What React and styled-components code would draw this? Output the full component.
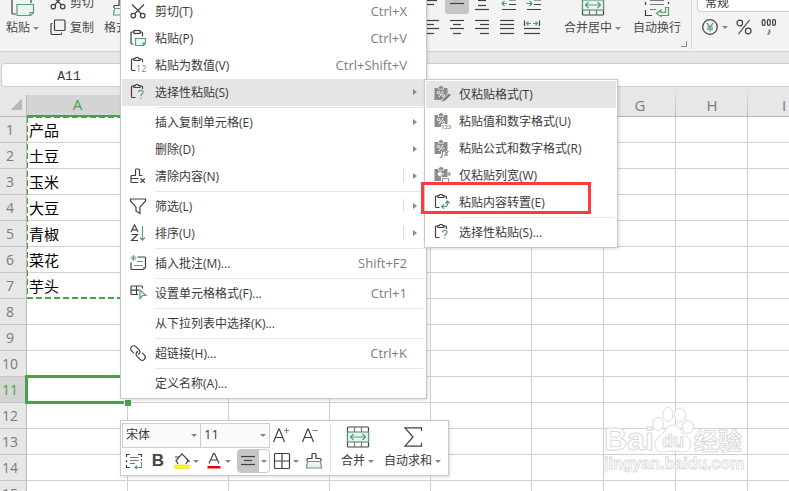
import React from 'react';
import styled, { createGlobalStyle } from 'styled-components';

const ink = '#404040';
const green = '#5a9c78';
const accent = '#43a643';

const GlobalStyle = createGlobalStyle`
    *{
        box-sizing: border-box;
    }
    body{
        margin: 0;
        overflow: hidden;
        background: #e7e7e7;
    }
    body, button, select, input{
        font-family: "Open Sans", "Noto Sans CJK SC", sans-serif;
        font-size: 12px;
        color: #3a3a3a;
    }
    button{
        border: 0;
        margin: 0;
        padding: 0;
        background: none;
        text-align: left;
        white-space: nowrap;
    }
    svg{
        display: block;
        flex-shrink: 0;
        overflow: visible;
    }
`;

const Root = styled.div`
    position: relative;
    height: 100vh;
    overflow: hidden;
`;

/* ---------- icons ---------- */

const Icon = ({ w = 18, h = 18, children }) => (
    <svg width={w} height={h} viewBox={`0 0 ${w} ${h}`} fill="none" stroke={ink} strokeWidth="1.2" aria-hidden="true">
        {children}
    </svg>
);

const Lines = ({ rows, w = 20, h = 18, children }) => (
    <Icon w={w} h={h}>
        {rows.map(([x1, x2, y]) => <path key={`${x1}-${y}`} d={`M${x1} ${y}.5H${x2}`} strokeWidth="1.2" />)}
        {children}
    </Icon>
);

const CutIcon = () => (
    <Icon>
        <path d="M3 2.500L12.500 12M15 2.500L5.500 12" />
        <circle cx="4.300" cy="13.600" r="2.300" />
        <circle cx="13.700" cy="13.600" r="2.300" />
    </Icon>
);

const CopyIcon = () => (
    <Icon>
        <rect x="5.500" y="2" width="10.500" height="10.500" rx="1" />
        <path d="M3.500 5.500H3a1 1 0 0 0-1 1V15.500a1 1 0 0 0 1 1H11.500a1 1 0 0 0 1-1V14.500" />
    </Icon>
);

const PasteIcon = () => (
    <Icon>
        <path d="M5 3H3a1 1 0 0 0-1 1V14a1 1 0 0 0 1 1H4.500M11 3H12.500a1 1 0 0 1 1 1V7.500" />
        <rect x="5" y="1.500" width="6" height="3" />
        <path d="M6.500 9.500H16.500V14.500L14.500 16.500H6.500Z" stroke={green} fill="#eaf4ee" />
        <path d="M16.500 14.200H14.200V16.500" stroke={green} />
    </Icon>
);

const Board = () => (
    <>
        <path d="M5 3H3.500a1 1 0 0 0-1 1V13.500a1 1 0 0 0 1 1H6.500M11 3H12.500a1 1 0 0 1 1 1V6" />
        <path d="M5 4.500V2.500H6.500L7 1.500H9L9.500 2.500H11V4.500Z" />
    </>
);

const Paste12Icon = () => (
    <Icon>
        <Board />
        <text x="7" y="16" fontSize="9" fill={green} stroke="none" fontFamily="Open Sans, sans-serif">12</text>
    </Icon>
);

const PasteAskIcon = () => (
    <Icon>
        <Board />
        <path d="M9.500 9.300C9.500 6.600 14 6.800 14 9.200C14 11 11.800 11 11.800 13" stroke={green} />
        <path d="M11.800 14.500V15.800" stroke={green} />
    </Icon>
);

const TransposeIcon = () => (
    <Icon>
        <Board />
        <path d="M9 13.500H12Q14.500 13.500 14.500 11V8.500" stroke={green} />
        <path d="M12.300 10.500L14.500 8L16.700 10.500M11 11.300L8.700 13.500L11 15.700" stroke={green} />
    </Icon>
);

const SolidBoard = ({ mark = '%', children }) => (
    <Icon>
        <path d="M1.500 3H5V4.500H11V3H14.500V15H1.500Z" fill="#8b8b8b" stroke="none" />
        <path d="M6 3.500V2H7L7.500 1H8.500L9 2H10V3.500Z" fill="#8b8b8b" stroke="#8b8b8b" strokeWidth="0.600" />
        {mark === '%' && (
            <>
                <path d="M10 6L6 12" stroke="#fff" strokeWidth="1" />
                <circle cx="5.500" cy="7.600" r="1.200" stroke="#fff" strokeWidth="1" />
                <circle cx="10.400" cy="10.400" r="1.200" stroke="#fff" strokeWidth="1" />
            </>
        )}
        {children}
    </Icon>
);

const FormatOnlyIcon = () => (
    <SolidBoard>
        <path d="M9.500 16.500L17.500 9.500" stroke="#e5e5e5" strokeWidth="4" />
        <path d="M11 15L17 9.200" stroke="#777" strokeWidth="2.200" />
        <path d="M8.500 17L10.200 14.200L11.600 15.600Z" fill="#777" stroke="none" />
    </SolidBoard>
);

const BoardTag = ({ text, italic }) => (
    <SolidBoard>
        <rect x="8" y="12" width="10" height="6" fill="#fff" stroke="none" />
        <text
            x="8" y="17" fontSize={italic ? 9 : 6} fontStyle={italic ? 'italic' : 'normal'} fontWeight="600"
            fill="#777" stroke="none" fontFamily="Open Sans, sans-serif"
        >
            {text}
        </text>
    </SolidBoard>
);

const ColumnWidthIcon = () => (
    <SolidBoard mark="none">
        <path d="M5 8H11M7 6L5 8L7 10M8 5.500V10.500" stroke="#fff" />
        <rect x="8" y="11" width="10" height="7" fill="#fff" stroke="none" />
        <path d="M9.500 18V12.500H15.500V18M12 8H17M15.500 6.300L17.300 8L15.500 9.700" stroke="#999" />
    </SolidBoard>
);

const ClearIcon = () => (
    <Icon>
        <path d="M9 15.500H3a1 1 0 0 1-1-1V9.500a1 1 0 0 1 1-1H6.500V3a1 1 0 0 1 1-1H9.500a1 1 0 0 1 1 1V8.500H13.500M2 11.500H9.500" />
        <path d="M11.500 11.500L15.800 15.800M15.800 11.500L11.500 15.800" />
    </Icon>
);

const FunnelIcon = () => (
    <Icon>
        <path d="M1.500 2H16.500V4L11 10.200V16.500L7 14V10.200L1.500 4Z" />
    </Icon>
);

const SortIcon = () => (
    <Icon>
        <path d="M2 8L5.500 .800L9 8M3.200 5.800H7.800M2.500 10.500H8.500L2.500 16.500H9" />
        <path d="M13.500 2V16M11 13.500L13.500 16.200L16 13.500" stroke={green} />
    </Icon>
);

const CommentIcon = () => (
    <Icon>
        <path d="M8.500 3H15.500a1 1 0 0 1 1 1V13.500L14.500 15.500H3a1 1 0 0 1-1-1V8.500" />
        <path d="M8 7.500H14M5 11.500H14M16.500 13.500H14.500V15.500" stroke="#888" />
        <path d="M4.500 1V7M1.500 4H7.500M2.300 1.800L6.700 6.200M6.700 1.800L2.300 6.200" stroke={green} strokeWidth="0.900" />
    </Icon>
);

const CellFormatIcon = () => (
    <Icon>
        <path d="M9 10.500H3a1 1 0 0 1-1-1V3a1 1 0 0 1 1-1H12.500a1 1 0 0 1 1 1V4.500" />
        <path d="M2 6.200H10M7.500 2V10.500" />
        <path d="M11 6V14.500L13.500 11.500H17Z" stroke={green} fill="#fff" />
    </Icon>
);

const LinkIcon = () => (
    <Icon>
        <g transform="rotate(45 9 9)">
            <path d="M6.500 12H3a3 3 0 0 1 0-6H7.500a3 3 0 0 1 2.800 4" />
            <path d="M11.500 6H15a3 3 0 0 1 0 6H10.500a3 3 0 0 1-2.800-4" />
        </g>
    </Icon>
);

const MergeIcon = () => (
    <Icon w={24} h={24}>
        <rect x="1.500" y="2" width="21" height="20" rx="1" />
        <path d="M8.500 2V7M15.500 2V7M8.500 17V22M15.500 17V22" stroke="#777" />
        <rect x="1.500" y="7" width="21" height="10" fill="#e8f3ec" stroke={green} />
        <path d="M4.500 12H19.500M7.500 9L4.500 12L7.500 15M16.500 9L19.500 12L16.500 15" stroke={green} />
    </Icon>
);

const WrapIcon = () => (
    <Icon w={24} h={24}>
        <path d="M.500 6V2.500H7M17 2.500H23.500V6M.500 17V22.500H7M.500 9V12M23.500 9V11" />
        <path d="M5 7.500H19M5 11.500H19M5 16.500H11" stroke="#777" />
        <path d="M20.500 14.500V19.500H16V17L11.500 20.500L16 23.500V22.500H23.500V14.500Z" stroke={green} fill="#eaf4ee" />
    </Icon>
);

const BigPasteIcon = () => (
    <Icon w={24} h={24}>
        <path d="M6 2H2a1 1 0 0 0-1 1V20a1 1 0 0 0 1 1H5M15 2H19a1 1 0 0 1 1 1V10" />
        <path d="M6 11.500H22.500V20L19.500 22.500H6Z" stroke={green} fill="#eaf4ee" />
        <path d="M22.500 19.500H19V22.500" stroke={green} />
    </Icon>
);

const BrushIcon = ({ w = 18 }) => (
    <Icon w={w} h={18}>
        <path d="M2 9V7.500a1 1 0 0 1 1-1H7V2.500a1 1 0 0 1 1-1H10a1 1 0 0 1 1 1V6.500H15a1 1 0 0 1 1 1V9" />
        <path d="M2.500 9.500H15.500L16.500 16H1.500Z" stroke={green} fill="#eaf4ee" />
    </Icon>
);

const YenIcon = () => (
    <Icon>
        <circle cx="9" cy="9" r="7.300" />
        <path d="M5.800 4.800L9 9L12.200 4.800M9 9V13.500M6 9H12M6 11.200H12" stroke={green} />
    </Icon>
);

const PercentIcon = () => (
    <Icon>
        <path d="M14.500 2L3.500 16" />
        <circle cx="4.800" cy="5" r="2.800" />
        <circle cx="13.200" cy="13" r="2.800" />
    </Icon>
);

const ThousandsIcon = () => (
    <Icon>
        <rect x="2.200" y="1.600" width="2.800" height="5.800" rx="1.400" />
        <rect x="7.400" y="1.600" width="2.800" height="5.800" rx="1.400" />
        <rect x="12.600" y="1.600" width="2.800" height="5.800" rx="1.400" />
        <path d="M9.500 11.500V14Q9.500 15.500 7.500 16.200" stroke={green} strokeWidth="2" />
    </Icon>
);

const IndentIcon = ({ out }) => (
    <Icon w={20}>
        <path d="M5 16.500H19M12 11.500H19M12 7H19" />
        <path d={out ? 'M5 10.500H10M7.500 8L5 10.500L7.500 13' : 'M4 10.500H10M7.500 8L10 10.500L7.500 13'} stroke={green} />
    </Icon>
);

const FitIcon = () => (
    <Lines rows={[[2, 18, 10], [2, 18, 15]]}>
        <path d="M2.500 2.500V8M17.500 2.500V8" />
        <path d="M4.500 5.500H9M11 5.500H15.500M6.500 3.500L4.500 5.500L6.500 7.500M13.500 3.500L15.500 5.500L13.500 7.500" stroke={green} />
    </Lines>
);

const SmallWrapIcon = () => (
    <Icon>
        <path d="M1.500 5V2.500H5M13 2.500H16.500V5M1.500 13V15.500H5M1.500 8V10M16.500 7V8.500" />
        <path d="M5 5.500H13.500M5 8.500H13.500M5 11.500H10" stroke="#777" />
        <path d="M16.500 10V15.500H10M12 13.500L10 15.500L12 17" stroke={green} />
    </Icon>
);

const FillIcon = () => (
    <Icon>
        <path d="M5 12L3 8.500L9 1.800L15 8L13 12M2 5H6M13.500 6.500L16.500 10" />
        <rect x="1.500" y="13" width="15" height="3.500" rx="1" fill="#ffff00" stroke="#c8c83c" strokeWidth="0.500" />
    </Icon>
);

const FontColorIcon = () => (
    <Icon>
        <path d="M4 11.500L8.500 1.500H9.500L14 11.500M5.500 8H12.500" />
        <rect x="2.500" y="14" width="13" height="2.500" fill="#f00000" stroke="none" />
    </Icon>
);

const BordersIcon = () => (
    <Icon>
        <rect x="1.500" y="1.500" width="15" height="15" rx="1" />
        <path d="M9 1.500V16.500M1.500 9H16.500" />
    </Icon>
);

const FontSizeIcon = ({ up }) => (
    <Icon>
        <path d="M1.500 16L6.700 3H7.300L12.500 16M3.300 11.500H10.700" />
        <path d={up ? 'M12 4.500H17M14.500 2V7' : 'M11.500 4.500H16.500'} stroke={green} />
    </Icon>
);

const SumIcon = () => (
    <Icon w={24} h={24}>
        <path d="M20.500 6V2.800H4L12 12L4 21.200H20.500V18" />
    </Icon>
);

/* ---------- ribbon ---------- */

const Ribbon = styled.header`
    display: flex;
    align-items: flex-end;
    height: 52px;
    padding-bottom: 12px;
    overflow: hidden;
    background: #f3f3f3;
    border-bottom: 1px solid #d4d4d4;
    color: #4a4a4a;
    button{
        color: #4a4a4a;
    }
`;

const ClipboardGroup = styled.div`
    display: flex;
    align-items: flex-end;
    gap: 10px;
    flex: 0 0 420px;
    padding-left: 6px;
`;

const Stack = styled.div`
    display: grid;
    grid-template-rows: 24px 24px;
    row-gap: 1px;
`;

const SmallButton = styled.button`
    display: flex;
    align-items: center;
    gap: 3px;
`;

const BigButton = styled.button`
    display: flex;
    flex-direction: column;
    align-items: center;
    line-height: 16px;
`;

const Caption = styled.span`
    display: flex;
    align-items: center;
    gap: 3px;
    padding: 3px 0;
`;

const Caret = styled.i`
    flex-shrink: 0;
    border: 3px solid transparent;
    border-top-color: #858585;
    border-bottom-width: 0;
`;

const AlignGrid = styled.div`
    display: grid;
    grid-template-columns: repeat(5, 25px);
    grid-template-rows: 24px 24px;
    row-gap: 1px;
`;

const IconButton = styled.button`
    display: flex;
    align-items: center;
    justify-content: center;
    gap: 3px;
    width: ${props => props.$wide ? 34 : 24}px;
    height: 24px;
    border-radius: 3px;
    background: ${props => props.$active ? '#c6c6c6' : 'none'};
`;

const MergeGroup = styled.div`
    display: flex;
    gap: 12px;
    padding-left: 19px;
`;

const Corner = styled.i`
    width: 6px;
    height: 6px;
    margin-bottom: -8px;
    border: solid #8a8a8a;
    border-width: 0 1px 1px 0;
`;

const NumberGroup = styled.div`
    flex: 1;
    display: grid;
    grid-template-rows: 24px 24px;
    row-gap: 2px;
    margin: 0 0 -10px 4px;
    padding: 0 0 10px 5px;
    border-left: 1px solid #dadada;
`;

const NumberFormat = styled.input`
    min-width: 0;
    width: 100%;
    height: 23px;
    padding: 2px 7px 0;
    border: 1px solid #cfcfcf;
    border-right: 0;
    border-radius: 4px 0 0 4px;
    background: #fff;
`;

const NumberTools = styled.div`
    display: flex;
    align-items: center;
    gap: 1px;
`;

const alignTop = [
    [[3, 17, 2], [5, 15, 7], [3, 12, 11]],
    [[6, 14, 6], [3, 17, 10]],
    [[6, 14, 7], [3, 17, 16], [6, 14, 12]],
];
const alignBottom = [
    [[3, 17, 2], [3, 12, 6], [3, 17, 10], [3, 12, 15]],
    [[3, 17, 2], [6, 14, 6], [3, 17, 10], [6, 14, 15]],
    [[3, 17, 2], [8, 17, 6], [3, 17, 10], [8, 17, 15]],
    [[3, 17, 2], [3, 17, 6], [3, 17, 10], [3, 17, 15]],
];

const TopRibbon = () => (
    <Ribbon>
        <ClipboardGroup>
            <BigButton>
                <BigPasteIcon />
                <Caption>粘贴 <Caret /></Caption>
            </BigButton>
            <Stack>
                <SmallButton><CutIcon />剪切</SmallButton>
                <SmallButton><CopyIcon />复制</SmallButton>
            </Stack>
            <BigButton>
                <BrushIcon w={20} />
                <Caption>格式刷</Caption>
            </BigButton>
        </ClipboardGroup>
        <AlignGrid>
            {alignTop.map((rows, i) => (
                <IconButton key={i} $active={i === 1} aria-label={`vertical align ${i + 1}`}><Lines rows={rows} /></IconButton>
            ))}
            <IconButton aria-label="decrease indent"><IndentIcon out /></IconButton>
            <IconButton aria-label="increase indent"><IndentIcon /></IconButton>
            {alignBottom.map((rows, i) => (
                <IconButton key={i} aria-label={`align ${i + 1}`}><Lines rows={rows} /></IconButton>
            ))}
            <IconButton aria-label="distribute"><FitIcon /></IconButton>
        </AlignGrid>
        <MergeGroup>
            <BigButton>
                <MergeIcon />
                <Caption>合并居中 <Caret /></Caption>
            </BigButton>
            <BigButton>
                <WrapIcon />
                <Caption>自动换行</Caption>
            </BigButton>
        </MergeGroup>
        <Corner />
        <NumberGroup>
            <NumberFormat aria-label="number format" defaultValue="常规" />
            <NumberTools>
                <IconButton $wide aria-label="currency"><YenIcon /><Caret /></IconButton>
                <IconButton aria-label="percent"><PercentIcon /></IconButton>
                <IconButton aria-label="thousands"><ThousandsIcon /></IconButton>
            </NumberTools>
        </NumberGroup>
    </Ribbon>
);

/* ---------- formula bar and sheet ---------- */

const FormulaBar = styled.div`
    display: flex;
    padding-top: 11px;
`;

const NameBox = styled.input`
    width: 160px;
    height: 24px;
    margin-left: 1px;
    padding: 2px 26px 0 2px;
    border: 1px solid #cdcdcd;
    border-radius: 4px;
    font-family: "Liberation Mono", monospace;
    font-size: 13px;
    text-align: center;
`;

const FormulaInput = styled.input`
    flex: 1;
    min-width: 0;
    height: 24px;
    margin-left: 12px;
    border: 1px solid #cdcdcd;
    border-right: 0;
    background: #fff;
`;

const Sheet = styled.table`
    width: 820px;
    table-layout: fixed;
    border-collapse: separate;
    border-spacing: 0;
    th, td{
        padding: 0;
        height: 26px;
        border: solid #d0d0d0;
        border-width: 0 1px 1px 0;
    }
    td{
        position: relative;
        padding-left: 2px;
        background: #fff;
        color: #000;
        font-size: 15px;
        line-height: 20px;
    }
`;

const ColHead = styled.th`
    &&{
        height: 30px;
        padding-top: 6px;
        line-height: 20px;
        border-width: 0 0 1px;
        border-color: #b8b8b8;
        background: linear-gradient(#e7e7e7, #b8b8b8) right / 1px 100% no-repeat #e7e7e7;
        font-size: 15px;
        font-weight: 400;
        color: #7a7a7a;
    }
    &&.selected{
        border-bottom: 2px solid ${accent};
        background: linear-gradient(#e7e7e7 8px, #d4d4d4 8px);
        color: ${accent};
    }
    &&.corner{
        background: linear-gradient(#e7e7e7 8px, #b8b8b8 8px) right / 1px 100% no-repeat #e7e7e7;
    }
`;

const CornerMark = styled.i`
    display: block;
    width: 11px;
    height: 11px;
    margin-left: 11px;
    background: linear-gradient(135deg, transparent 50%, #b9b9b9 50%);
`;

const RowHead = styled.th`
    &&{
        padding-right: 6px;
        border-color: #c6c6c6;
        border-right-color: #b8b8b8;
        background: ${props => props.$selected ? '#d4d4d4' : '#e7e7e7'};
        color: ${props => props.$selected ? accent : '#7a7a7a'};
        font-size: 14px;
        font-weight: 400;
        line-height: 20px;
    }
`;

// copied range, spans the seven filled rows below its own cell
const CopyRange = styled.div`
    position: absolute;
    z-index: 1;
    top: 0;
    left: 0;
    right: 0;
    height: calc(700% + 7px);
    background:
        repeating-linear-gradient(90deg, ${accent} 0 6px, #fff 6px 9px) top / 100% 1px no-repeat,
        repeating-linear-gradient(90deg, ${accent} 0 6px, #fff 6px 9px) bottom / 100% 2px no-repeat,
        repeating-linear-gradient(${accent} 0 6px, #fff 6px 9px) left / 1px 100% no-repeat;
`;

const ActiveCell = styled.div`
    position: absolute;
    z-index: 1;
    inset: -2px;
    border: 3px solid ${accent};
    &:after{
        content: "";
        position: absolute;
        right: -5px;
        bottom: -5px;
        width: 6px;
        height: 6px;
        background: ${accent};
        border: solid #fff;
        border-width: 1px 0 0 1px;
    }
`;

const columns = ['A', 'B', 'C', 'D', 'E', 'F', 'G', 'H', 'I'];
const products = ['产品', '土豆', '玉米', '大豆', '青椒', '菜花', '芋头'];

const Grid = () => (
    <Sheet>
        <colgroup>
            <col style={{ width: 27 }} />
            {columns.map((c, i) => <col key={c} style={{ width: i < 5 ? 101 : 72 }} />)}
        </colgroup>
        <thead>
            <tr>
                <ColHead className="corner"><CornerMark /></ColHead>
                {columns.map(c => <ColHead key={c} className={c === 'A' ? 'selected' : ''}>{c}</ColHead>)}
            </tr>
        </thead>
        <tbody>
            {Array.from({ length: 15 }, (_, i) => (
                <tr key={i}>
                    <RowHead $selected={i === 10}>{i + 1}</RowHead>
                    {columns.map(c => (
                        <td key={c}>
                            {c === 'A' && products[i]}
                            {c === 'A' && i === 0 && <CopyRange />}
                            {c === 'A' && i === 10 && <ActiveCell />}
                        </td>
                    ))}
                </tr>
            ))}
        </tbody>
    </Sheet>
);

/* ---------- context menus ---------- */

const Menu = styled.div`
    position: absolute;
    z-index: 2;
    left: 120px;
    top: -4px;
    width: 307px;
    padding: 1px;
    background: #fff;
    border: 1px solid #c9c9c9;
    box-shadow: 1px 1px 3px rgba(0, 0, 0, 0.15);
`;

const SubMenu = styled(Menu)`
    z-index: 3;
    left: 424px;
    top: 79px;
    width: 194px;
`;

const MenuButton = styled.button`
    display: flex;
    align-items: center;
    width: 100%;
    height: 27px;
    padding: 0 0 2px 6px;
    background: ${props => props.$active ? '#e5e5e5' : '#fff'};
`;

const IconSlot = styled.span`
    display: flex;
    justify-content: center;
    width: 20px;
    margin-right: 7px;
`;

const MenuLabel = styled.span`
    flex: 1;
`;

const Shortcut = styled.span`
    padding-right: 18px;
    font-size: 13px;
    color: #7d7d7d;
`;

const ArrowSlot = styled.span`
    display: flex;
    align-items: center;
    justify-content: center;
    width: 22px;
    height: 13px;
    border-left: 1px solid ${props => props.$split ? '#dcdcdc' : 'transparent'};
    &:after{
        content: "";
        margin-left: 1px;
        border: 3px solid transparent;
        border-left: 4px solid #8a8a8a;
        border-right-width: 0;
    }
`;

const Line = styled.hr`
    height: 1px;
    margin: 1px 2px 1px 33px;
    border: 0;
    background: #e6e6e6;
`;

const menu = [
    { label: '剪切(T)', icon: <CutIcon />, keys: 'Ctrl+X' },
    { label: '粘贴(P)', icon: <PasteIcon />, keys: 'Ctrl+V' },
    { label: '粘贴为数值(V)', icon: <Paste12Icon />, keys: 'Ctrl+Shift+V' },
    { label: '选择性粘贴(S)', icon: <PasteAskIcon />, arrow: true, active: true },
    null,
    { label: '插入复制单元格(E)', arrow: true },
    { label: '删除(D)', arrow: true },
    { label: '清除内容(N)', icon: <ClearIcon />, arrow: true, split: true },
    null,
    { label: '筛选(L)', icon: <FunnelIcon />, arrow: true, split: true },
    { label: '排序(U)', icon: <SortIcon />, arrow: true, split: true },
    null,
    { label: '插入批注(M)...', icon: <CommentIcon />, keys: 'Shift+F2' },
    null,
    { label: '设置单元格格式(F)...', icon: <CellFormatIcon />, keys: 'Ctrl+1' },
    null,
    { label: '从下拉列表中选择(K)...' },
    null,
    { label: '超链接(H)...', icon: <LinkIcon />, keys: 'Ctrl+K' },
    null,
    { label: '定义名称(A)...' },
];

const pasteMenu = [
    { label: '仅粘贴格式(T)', icon: <FormatOnlyIcon />, active: true },
    { label: '粘贴值和数字格式(U)', icon: <BoardTag text="123" /> },
    { label: '粘贴公式和数字格式(R)', icon: <BoardTag text="fx" italic /> },
    { label: '仅粘贴列宽(W)', icon: <ColumnWidthIcon /> },
    { label: '粘贴内容转置(E)', icon: <TransposeIcon /> },
    null,
    { label: '选择性粘贴(S)...', icon: <PasteAskIcon /> },
];

const renderItems = items => items.map((item, i) => {
    if (!item) return <Line key={i} />;
    return <MenuButton key={item.label} role="menuitem" $active={item.active}>
        <IconSlot>{item.icon}</IconSlot>
        <MenuLabel>{item.label}</MenuLabel>
        {item.keys && <Shortcut>{item.keys}</Shortcut>}
        {item.arrow && <ArrowSlot $split={item.split} />}
    </MenuButton>;
});

const Highlight = styled.div`
    position: absolute;
    z-index: 4;
    left: 421px;
    top: 182px;
    width: 170px;
    height: 32px;
    border: 3px solid #ff3a3a;
    pointer-events: none;
`;

/* ---------- mini toolbar ---------- */

const MiniBar = styled.div`
    position: absolute;
    z-index: 2;
    left: 120px;
    top: 420px;
    display: flex;
    padding: 1px;
    background: #fff;
    border: 1px solid #c9c9c9;
    box-shadow: 1px 1px 3px rgba(0, 0, 0, 0.15);
`;

const MiniRow = styled.div`
    display: flex;
    align-items: center;
    height: 26px;
`;

const Picker = styled.label`
    display: flex;
    align-items: center;
    width: ${props => props.$width}px;
    height: 25px;
    margin-right: -1px;
    border: 1px solid #cdcdcd;
    background: #fafafa;
    select{
        appearance: none;
        flex: 1;
        min-width: 0;
        height: 23px;
        padding: 0 3px 2px;
        border: 0;
        background: none;
        font-size: ${props => props.$size}px;
    }
    i{
        margin-right: 3px;
    }
`;

const Split = styled.button`
    display: flex;
    align-items: center;
    width: 29px;
    height: 24px;
    margin-left: 3px;
    gap: 2px;
`;

const AlignSplit = styled(Split)`
    width: 33px;
    gap: 0;
    border: 1px solid #c6c6c6;
    border-radius: 4px;
    background: #c6c6c6;
    svg{
        margin-right: 1px;
    }
`;

const SplitArrow = styled.span`
    display: flex;
    align-items: center;
    justify-content: center;
    flex: 1;
    align-self: stretch;
    background: #fff;
    border-radius: 0 3px 3px 0;
`;

const Bold = styled.b`
    font-family: "Liberation Sans", sans-serif;
    font-size: 17px;
    line-height: 20px;
    color: #444;
`;

const MiniSide = styled.div`
    display: flex;
    align-items: flex-end;
    gap: 10px;
    margin: 2px 0 2px 3px;
    padding: 0 6px 0 10px;
    border-left: 1px solid #e2e2e2;
    button > span{
        padding: 4px 0 3px;
    }
`;

const MiniToolbar = () => (
    <MiniBar role="toolbar">
        <div>
            <MiniRow>
                <Picker $width={79} $size={12}>
                    <select aria-label="font"><option>宋体</option></select>
                    <Caret />
                </Picker>
                <Picker $width={70} $size={13}>
                    <select aria-label="font size"><option>11</option></select>
                    <Caret />
                </Picker>
                <IconButton aria-label="increase font size"><FontSizeIcon up /></IconButton>
                <IconButton $wide aria-label="decrease font size"><FontSizeIcon /></IconButton>
            </MiniRow>
            <MiniRow>
                <IconButton aria-label="wrap text"><SmallWrapIcon /></IconButton>
                <IconButton aria-label="bold"><Bold>B</Bold></IconButton>
                <Split aria-label="fill color"><FillIcon /><Caret /></Split>
                <Split aria-label="font color"><FontColorIcon /><Caret /></Split>
                <AlignSplit aria-label="align center">
                    <Lines rows={[[3, 17, 4], [6, 14, 8], [3, 17, 12]]} />
                    <SplitArrow><Caret /></SplitArrow>
                </AlignSplit>
                <Split aria-label="borders"><BordersIcon /><Caret /></Split>
                <IconButton aria-label="clear format"><BrushIcon /></IconButton>
            </MiniRow>
        </div>
        <MiniSide>
            <BigButton><MergeIcon /><Caption>合并 <Caret /></Caption></BigButton>
            <BigButton><SumIcon /><Caption>自动求和 <Caret /></Caption></BigButton>
        </MiniSide>
    </MiniBar>
);

/* ---------- watermark ---------- */

const Watermark = styled.div`
    position: absolute;
    left: 602px;
    top: 404px;
    svg{
        font-family: "Liberation Sans", "Noto Sans CJK SC", sans-serif;
        font-weight: bold;
    }
`;

const BaiduMark = () => (
    <Watermark>
        <svg width="146" height="74" viewBox="0 0 146 74" fill="#fff" stroke="#dadada" strokeWidth="1">
            <text x="2" y="46" fontSize="32">Bai</text>
            <ellipse cx="56" cy="20" rx="5.500" ry="6.500" />
            <ellipse cx="66" cy="10.500" rx="5" ry="7" />
            <ellipse cx="78" cy="11" rx="5.500" ry="7" />
            <ellipse cx="86" cy="23" rx="5.500" ry="6.500" />
            <path d="M70.500 21C78 21 79 29 84 32C92 38 89 49 80 48Q70.500 46 62 48C52 49 50 38 57 33C63 29 64 21 70.500 21Z" />
            <text x="60" y="43" fontSize="18">du</text>
            <text x="92" y="46" fontSize="24">经验</text>
            <text x="2" y="65" fontSize="16" strokeWidth="0.800">jingyan.baidu.com</text>
        </svg>
    </Watermark>
);

const App = () => {
    return <Root>
        <GlobalStyle />
        <TopRibbon />
        <FormulaBar>
            <NameBox aria-label="name box" defaultValue="A11" />
            <FormulaInput aria-label="formula" />
        </FormulaBar>
        <Grid />
        <BaiduMark />
        <Menu role="menu">{renderItems(menu)}</Menu>
        <SubMenu role="menu">{renderItems(pasteMenu)}</SubMenu>
        <Highlight />
        <MiniToolbar />
    </Root>;
};

export default App;
